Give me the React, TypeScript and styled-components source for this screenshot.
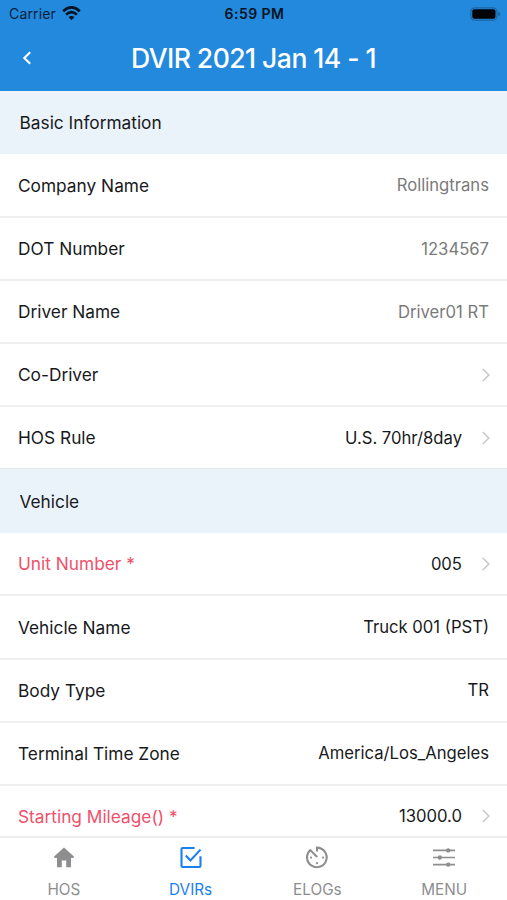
import React from "react";
import styled, { createGlobalStyle } from "styled-components";

const GlobalStyle = createGlobalStyle`
  * { box-sizing: border-box; }
  body { margin: 0; background: #fff; font-family: Inter, "Liberation Sans", sans-serif; }
`;

const Screen = styled.div`
  display: flex;
  flex-direction: column;
  width: 507px;
  height: 900px;
  overflow: hidden;
  background: #fff;
`;

const Header = styled.header`
  flex: none;
  height: 90.6px;
  background: #2289dd;
`;

const StatusBar = styled.div`
  display: grid;
  grid-template-columns: 1fr auto 1fr;
  align-items: center;
  height: 27px;
  padding: 0 6px 0 9px;
  color: #06203a;
  font-size: 14px;
`;

const Carrier = styled.div`
  display: flex;
  align-items: center;
  gap: 6px;
  letter-spacing: 0.15px;
`;

const Clock = styled.div`
  margin-left: -1px;
  font-weight: 600;
  letter-spacing: 0.45px;
  color: #04131f;
`;

const Battery = styled.div`
  display: flex;
  justify-content: flex-end;
`;

const NavBar = styled.div`
  display: grid;
  grid-template-columns: 53px 1fr 53px;
  align-items: center;
  height: 62px;
  color: #fff;
`;

const BackButton = styled.button`
  display: flex;
  justify-content: center;
  padding: 0;
  border: 0;
  background: none;
  color: inherit;
`;

const Title = styled.h1`
  margin: 0;
  text-align: center;
  font-size: 26.6px;
  font-weight: 450;
  letter-spacing: -0.56px;
  line-height: 62px;
`;

const Content = styled.main`
  flex: 1;
  min-height: 0;
  overflow: hidden;
`;

const SectionTitle = styled.h2`
  display: flex;
  align-items: center;
  height: 63.5px;
  margin: 0;
  padding: 1px 19px 0 19.5px;
  background: #ebf3fa;
  color: #17191b;
  font-size: 17.3px;
  font-weight: 400;
`;

const Row = styled.div<{ $last?: boolean }>`
  display: flex;
  align-items: center;
  justify-content: space-between;
  height: ${(p) => (p.$last ? "61.7px" : "63.15px")};
  padding: 0 18px;
  border-bottom: ${(p) => (p.$last ? "1px solid #e2e9ef" : "2px solid #f0f0f0")};

  h2 + & {
    height: 63.9px;
  }
`;

const Label = styled.span<{ $required?: boolean }>`
  color: ${(p) => (p.$required ? "#f0506a" : "#17191b")};
  font-size: 17.3px;
`;

const Value = styled.span<{ $muted?: boolean; $link?: boolean }>`
  display: flex;
  align-items: center;
  gap: 20px;
  margin-right: ${(p) => (p.$link ? "-1px" : "0")};
  color: ${(p) => (p.$muted ? "#7a7a7a" : "#17191b")};
  font-size: 16.65px;
`;

const TabBar = styled.nav`
  display: grid;
  grid-template-columns: repeat(4, 1fr);
  flex: none;
  height: 64px;
  border-top: 2px solid #ececec;
  background: #fff;
`;

const Tab = styled.a<{ $active?: boolean }>`
  display: flex;
  flex-direction: column;
  align-items: center;
  padding: 7px 0 0 1px;
  color: ${(p) => (p.$active ? "#1a7ff0" : "#8e8e90")};
  font-size: 15.3px;
  line-height: 18px;
`;

const TabIcon = styled.span`
  display: flex;
  height: 26px;
  margin-bottom: 10px;
`;

const Wifi = () => (
  <svg width="19" height="15" viewBox="0 0 19 15" fill="none" stroke="#04131f">
    <path d="M1.2 5.2Q9.5 -2.6 17.8 5.2" strokeWidth="2.7" />
    <path d="M4.1 8.6Q9.5 3.6 14.9 8.6" strokeWidth="2.5" />
    <path d="M9.5 14.2L6.5 11.1Q9.5 8.7 12.5 11.1Z" fill="#04131f" stroke="none" />
  </svg>
);

const BatteryIcon = () => (
  <svg width="31" height="14" viewBox="0 0 31 14">
    <rect x="0.9" y="0.8" width="26" height="12.4" rx="3.6" fill="none" stroke="#1b66a3" strokeWidth="1.2" />
    <rect x="2.3" y="2.2" width="23.2" height="9.6" rx="2" fill="#020406" />
    <path d="M28.3 4.8Q30.2 5.5 30.2 7T28.3 9.2Z" fill="#185f99" />
  </svg>
);

const Back = () => (
  <svg width="10" height="14" viewBox="0 0 10 14" fill="none" stroke="currentColor" strokeWidth="2.1">
    <path d="M8.2 1.2L2.3 7L8.2 12.8" />
  </svg>
);

const Chevron = () => (
  <svg width="8" height="14" viewBox="0 0 8 14" fill="none" stroke="#c8c8ca" strokeWidth="1.6">
    <path d="M0.8 1L6.8 7L0.8 13" />
  </svg>
);

const HomeIcon = () => (
  <svg width="24" height="26" viewBox="0 0 24 26" fill="currentColor">
    <path d="M12 2.4L22.2 11.8L21.2 13H19V22.3H14.2V15.5H9.8V22.3H5V13H2.8L1.8 11.8Z" />
  </svg>
);

const CheckIcon = () => (
  <svg width="24" height="26" viewBox="0 0 24 26" fill="none" stroke="currentColor" strokeWidth="2.1">
    <path d="M15.6 3H3.7Q2.5 3 2.5 4.2V20.8Q2.5 22 3.7 22H20.3Q21.5 22 21.5 20.8V11.2" />
    <path d="M6.8 10.6L11.4 15.4L21.5 4.6" />
  </svg>
);

const DialIcon = () => (
  <svg width="24" height="26" viewBox="0 0 24 26" fill="none" stroke="currentColor" strokeWidth="2.1">
    <path d="M12 6.5V2.6A9.8 9.8 0 1 1 5.3 5.1L12.2 12" />
    <g fill="currentColor" stroke="none">
      <circle cx="6" cy="12.6" r="1.1" />
      <circle cx="18" cy="12.6" r="1.1" />
      <circle cx="12" cy="18.2" r="1.1" />
    </g>
  </svg>
);

const SlidersIcon = () => (
  <svg width="24" height="26" viewBox="0 0 24 26" fill="none" stroke="currentColor" strokeWidth="1.7">
    <path d="M1 5.4H23M1 12.5H23M1 19.6H23" />
    <g fill="currentColor" stroke="none">
      <circle cx="16.2" cy="5.4" r="2.2" />
      <circle cx="7.8" cy="12.5" r="2.2" />
      <circle cx="16.2" cy="19.6" r="2.2" />
    </g>
  </svg>
);

type Field = { label: string; value?: string; muted?: boolean; link?: boolean; required?: boolean };

const basic: Field[] = [
  { label: "Company Name", value: "Rollingtrans", muted: true },
  { label: "DOT Number", value: "1234567", muted: true },
  { label: "Driver Name", value: "Driver01 RT", muted: true },
  { label: "Co-Driver", link: true },
  { label: "HOS Rule", value: "U.S. 70hr/8day", link: true },
];

const vehicle: Field[] = [
  { label: "Unit Number *", value: "005", link: true, required: true },
  { label: "Vehicle Name", value: "Truck 001 (PST)" },
  { label: "Body Type", value: "TR" },
  { label: "Terminal Time Zone", value: "America/Los_Angeles" },
  { label: "Starting Mileage() *", value: "13000.0", link: true, required: true },
];

const tabs = [
  { label: "HOS", Icon: HomeIcon },
  { label: "DVIRs", Icon: CheckIcon, active: true },
  { label: "ELOGs", Icon: DialIcon },
  { label: "MENU", Icon: SlidersIcon },
];

const Section = ({ title, fields }: { title: string; fields: Field[] }) => (
  <section>
    <SectionTitle>{title}</SectionTitle>
    {fields.map((f, i) => (
      <Row key={f.label} $last={i === fields.length - 1}>
        <Label $required={f.required}>{f.label}</Label>
        <Value $muted={f.muted} $link={f.link}>
          {f.value && <span>{f.value}</span>}
          {f.link && <Chevron />}
        </Value>
      </Row>
    ))}
  </section>
);

export default function App() {
  return (
    <Screen>
      <GlobalStyle />
      <Header>
        <StatusBar>
          <Carrier>
            Carrier
            <Wifi />
          </Carrier>
          <Clock>6:59 PM</Clock>
          <Battery>
            <BatteryIcon />
          </Battery>
        </StatusBar>
        <NavBar>
          <BackButton aria-label="Back">
            <Back />
          </BackButton>
          <Title>DVIR 2021 Jan 14 - 1</Title>
        </NavBar>
      </Header>
      <Content>
        <Section title="Basic Information" fields={basic} />
        <Section title="Vehicle" fields={vehicle} />
      </Content>
      <TabBar>
        {tabs.map(({ label, Icon, active }) => (
          <Tab key={label} $active={active}>
            <TabIcon>
              <Icon />
            </TabIcon>
            {label}
          </Tab>
        ))}
      </TabBar>
    </Screen>
  );
}
